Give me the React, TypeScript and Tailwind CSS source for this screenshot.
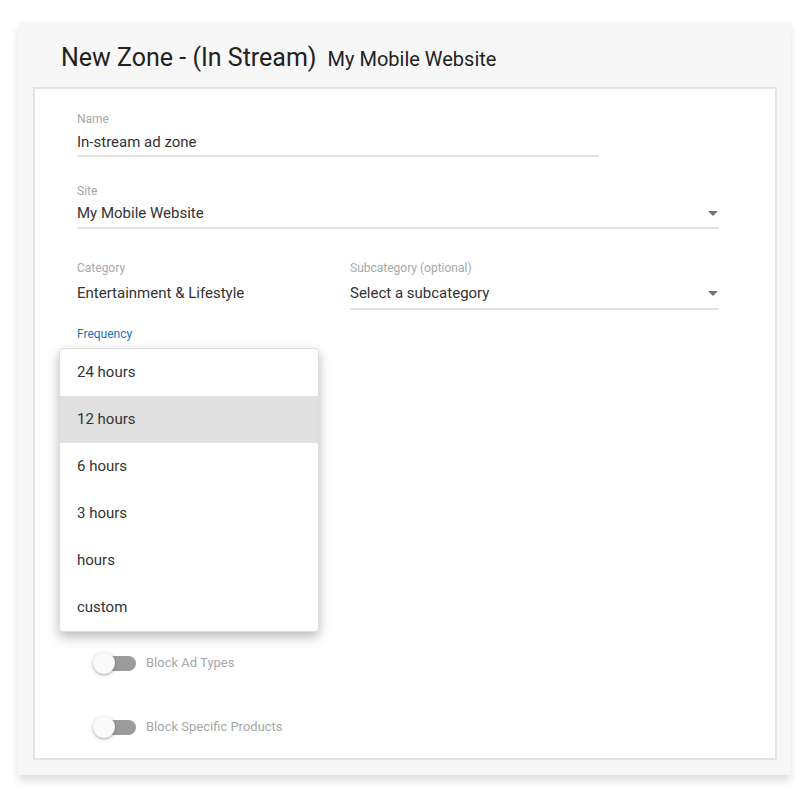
import React from "react";

const frequencyOptions = ["24 hours", "12 hours", "6 hours", "3 hours", "hours", "custom"];

function Caret() {
  return (
    <svg width="10" height="5" viewBox="0 0 10 5" className="shrink-0">
      <path d="M0 0h10L5 5z" fill="#757575" />
    </svg>
  );
}

function Toggle({ label }: { label: string }) {
  return (
    <div className="flex items-center h-6">
      <div className="relative w-[43px] h-6 shrink-0 ml-[16px]">
        <div className="absolute left-[7px] top-[5px] w-9 h-[15px] rounded-full bg-[#9b9b9b]" />
        <div className="absolute left-0 top-px w-[22px] h-[22px] rounded-full bg-[#fafafa] shadow-[0_1px_3px_rgba(0,0,0,0.35)]" />
      </div>
      <span className="ml-[10px] text-[13px] text-[#a8a8a8]">{label}</span>
    </div>
  );
}

export default function App() {
  return (
    <div className="w-[810px] h-[798px] bg-white pt-[22px] pl-[18px] font-['Roboto',sans-serif]">
      <div className="w-[773px] h-[753px] bg-[#f7f7f7] shadow-[0_6px_8px_rgba(0,0,0,0.12)] flex flex-col">
        <div className="h-[65px] pl-[43px] pt-[21px] flex items-baseline gap-[11px] text-[#222]">
          <span className="text-[25px] leading-[30px]">New Zone - (In Stream)</span>
          <span className="text-[20px] leading-[30px]">My Mobile Website</span>
        </div>

        <div className="relative ml-[15px] w-[744px] h-[673px] bg-white border-2 border-[#e4e4e4] pl-[42px]">
          <div className="pt-[22px] w-[522px]">
            <div className="text-[12px] leading-4 text-[#a8a8a8]">Name</div>
            <div className="mt-[5px] h-[25px] border-b-2 border-[#e3e3e3] text-[15px] leading-5 text-[#333]">
              In-stream ad zone
            </div>
          </div>

          <div className="mt-[26px] w-[642px]">
            <div className="text-[12px] leading-4 text-[#a8a8a8]">Site</div>
            <div className="mt-[4px] h-[26px] border-b-2 border-[#e3e3e3] flex items-start justify-between pr-[1px]">
              <span className="text-[15px] leading-5 text-[#333]">My Mobile Website</span>
              <span className="mt-[8px]"><Caret /></span>
            </div>
          </div>

          <div className="mt-[31px] flex w-[642px]">
            <div className="w-[273px]">
              <div className="text-[12px] leading-4 text-[#a8a8a8]">Category</div>
              <div className="mt-[7px] text-[15px] leading-5 text-[#333]">Entertainment &amp; Lifestyle</div>
            </div>
            <div className="flex-1">
              <div className="text-[12px] leading-4 text-[#a8a8a8]">Subcategory (optional)</div>
              <div className="mt-[7px] h-[27px] border-b-2 border-[#e3e3e3] flex items-start justify-between pr-[1px]">
                <span className="text-[15px] leading-5 text-[#333]">Select a subcategory</span>
                <span className="mt-[8px]"><Caret /></span>
              </div>
            </div>
          </div>

          <div className="mt-[16px] text-[12px] leading-4 text-[#1a73bd]">Frequency</div>

          <div className="mt-[309px] flex flex-col gap-[40px]">
            <Toggle label="Block Ad Types" />
            <Toggle label="Block Specific Products" />
          </div>

          <div className="absolute left-[24px] top-[259px] w-[260px] bg-white border border-[#dedede] rounded-[4px] shadow-[0_5px_12px_rgba(0,0,0,0.28)] overflow-hidden">
            {frequencyOptions.map((opt) => (
              <div
                key={opt}
                className={
                  opt === "12 hours"
                    ? "h-[47px] flex items-center pl-[17px] text-[15px] text-[#333] bg-[#e0e0e0]"
                    : "h-[47px] flex items-center pl-[17px] text-[15px] text-[#333]"
                }
              >
                {opt}
              </div>
            ))}
          </div>
        </div>
      </div>
    </div>
  );
}
